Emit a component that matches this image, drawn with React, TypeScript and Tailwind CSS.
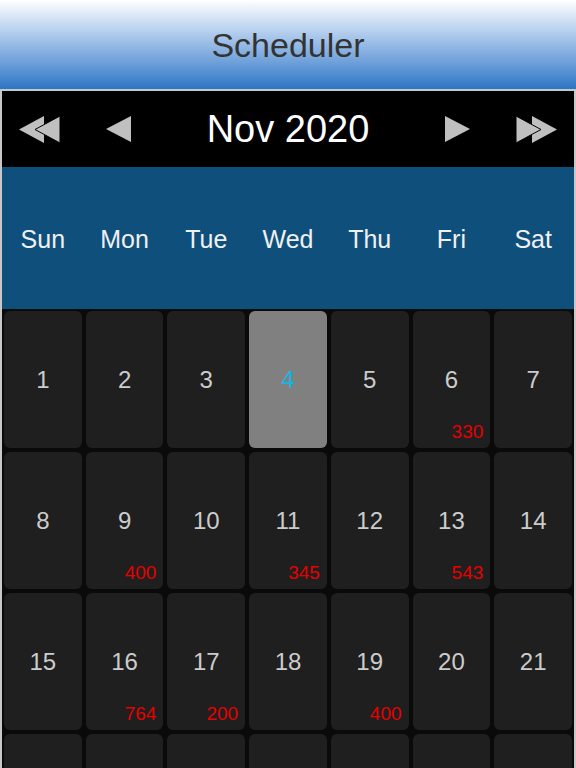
import React from "react";

const days = ["Sun", "Mon", "Tue", "Wed", "Thu", "Fri", "Sat"];
const counts: Record<number, string> = { 6: "330", 9: "400", 11: "345", 13: "543", 16: "764", 17: "200", 19: "400" };

function DoubleLeft() {
  return (
    <svg width="42" height="27" viewBox="0 0 42 27">
      <polygon points="0,13.5 25,0 25,27" fill="#c0c0c0" />
      <polygon points="16,13.5 41,0 41,27" fill="#c0c0c0" stroke="#000" strokeWidth="1" />
    </svg>
  );
}
function DoubleRight() {
  return (
    <svg width="42" height="27" viewBox="0 0 42 27">
      <polygon points="42,13.5 17,0 17,27" fill="#c0c0c0" />
      <polygon points="26,13.5 1,0 1,27" fill="#c0c0c0" stroke="#000" strokeWidth="1" />
    </svg>
  );
}
function Left() {
  return (
    <svg width="25" height="26" viewBox="0 0 25 26">
      <polygon points="0,13 25,0 25,26" fill="#c0c0c0" />
    </svg>
  );
}
function Right() {
  return (
    <svg width="25" height="26" viewBox="0 0 25 26">
      <polygon points="25,13 0,0 0,26" fill="#c0c0c0" />
    </svg>
  );
}

export default function App() {
  const cells: number[] = [];
  for (let i = 1; i <= 28; i++) cells.push(i);
  return (
    <div className="w-[576px] h-[768px] overflow-hidden bg-white" style={{ fontFamily: '"Liberation Sans", Arial, sans-serif' }}>
      <div className="h-[89px] flex items-center justify-center bg-gradient-to-b from-[#ffffff] to-[#2a76c6]">
        <span className="text-[34px] text-[#333333] leading-none">Scheduler</span>
      </div>
      <div className="border-2 border-[#c8c8c8] border-b-0">
        <div className="h-[76px] bg-black flex items-center pl-[17px] pr-[17px]">
          <DoubleLeft />
          <div className="ml-[45px]"><Left /></div>
          <div className="flex-1 text-center text-white text-[38px] leading-none">Nov 2020</div>
          <div className="mr-[45px]"><Right /></div>
          <DoubleRight />
        </div>
        <div className="h-[142px] pt-[4px] bg-[#0f4f7b] grid grid-cols-7 items-center">
          {days.map((d) => (
            <div key={d} className="text-center text-[25px] text-[#f0f0f0]">{d}</div>
          ))}
        </div>
        <div className="bg-[#0a0a0a] grid grid-cols-7">
          {cells.map((n) => {
            const today = n === 4;
            const shown = n <= 21;
            return (
              <div key={n} className="h-[141px] p-[2px]">
                <div className={`relative h-full rounded-[6px] flex items-center justify-center ${today ? "bg-[#808080]" : "bg-[#1f1f1f]"}`}>
                  {shown && (
                    <span className={`text-[24px] ${today ? "text-[#19b5e0]" : "text-[#cccccc]"}`}>{n}</span>
                  )}
                  {counts[n] && (
                    <span className="absolute right-[7px] bottom-[7px] text-[19px] leading-none text-[#e60000]">{counts[n]}</span>
                  )}
                </div>
              </div>
            );
          })}
        </div>
      </div>
    </div>
  );
}
